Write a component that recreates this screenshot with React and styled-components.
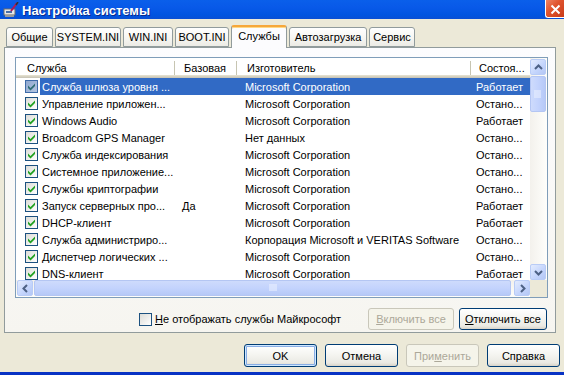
import React from 'react'
import styled, { createGlobalStyle } from 'styled-components'

const FONT = '"Liberation Sans", Arial, sans-serif'

const GlobalStyle = createGlobalStyle`
	html, body {
		margin: 0;
		padding: 0;
	}
	body {
		background: #ECE9D8;
		font-family: ${FONT};
		font-size: 11px;
		color: #000;
	}
`

const Window = styled.div`
	width: 564px;
	height: 375px;
	overflow: hidden;
	display: flex;
	flex-direction: column;
	background: #ECE9D8;
`

const TitleBar = styled.div`
	height: 19px;
	flex: none;
	display: flex;
	align-items: center;
	background: linear-gradient(#0A5FEA, #0859E8 40%, #0054E0 80%, #0A4FD4);
	padding-left: 3px;
	box-sizing: border-box;
`

const TitleText = styled.div`
	color: #fff;
	font-family: ${FONT};
	font-weight: 700;
	font-size: 13px;
	margin-left: 3px;
	padding-top: 1px;
	text-shadow: 1px 1px 0 #0A2A8C;
	flex: 1;
`

const CloseButton = styled.div`
	width: 19px;
	height: 21px;
	margin-top: -4px;
	box-sizing: border-box;
	border: 1px solid #fff;
	border-right: none;
	border-radius: 0 0 0 3px;
	background: linear-gradient(135deg, #F08A6C, #E0542E 45%, #C83A18);
	display: flex;
	align-items: center;
	justify-content: center;
	padding-top: 3px;
`

const Body = styled.div`
	flex: 1;
	display: flex;
	flex-direction: column;
	padding: 6px 4px 0 4px;
`

const TabStrip = styled.div`
	display: flex;
	align-items: flex-end;
	gap: 2px;
	height: 22px;
	padding-left: 2px;
	position: relative;
	z-index: 1;
`

const Tab = styled.div`
	width: ${({ $w }) => $w}px;
	height: ${({ $active }) => ($active ? 23 : 20)}px;
	margin-bottom: ${({ $active }) => ($active ? -1 : 0)}px;
	box-sizing: border-box;
	border: 1px solid #919B9C;
	border-bottom: ${({ $active }) => ($active ? 'none' : '1px solid #919B9C')};
	border-top: ${({ $active }) => ($active ? '2px solid #F6A73B' : '1px solid #919B9C')};
	border-radius: 3px 3px 0 0;
	background: ${({ $active }) =>
		$active ? '#FCFCFE' : 'linear-gradient(#FFFFFF, #F7F7F3 50%, #ECEBE5)'};
	box-shadow: ${({ $active }) => ($active ? 'inset 0 1px 0 #FFD886' : 'none')};
	display: flex;
	align-items: center;
	justify-content: center;
	padding-bottom: ${({ $active }) => ($active ? 3 : 0)}px;
	white-space: nowrap;
`

const Panel = styled.div`
	height: 286px;
	box-sizing: border-box;
	margin-right: 4px;
	border: 1px solid #919B9C;
	background: linear-gradient(#FCFCFE, #F6F5F0);
	padding: 9px 7px 0 10px;
	display: flex;
	flex-direction: column;
`

const ListView = styled.div`
	height: 241px;
	box-sizing: border-box;
	border: 1px solid #7F9DB9;
	background: #fff;
	display: grid;
	grid-template-columns: 1fr 17px;
	grid-template-rows: 1fr 17px;
	overflow: hidden;
`

const ListContent = styled.div`
	overflow: hidden;
`

const COLS = '159px 62px 234px 59px'

const HeaderRow = styled.div`
	display: grid;
	grid-template-columns: ${COLS};
	height: 20px;
	background: #fff;
	box-shadow: inset 0 -1px 0 #CBC7B8, inset 0 -2px 0 #D6D2C2, inset 0 -3px 0 #E2DECD;
`

const HeaderCell = styled.div`
	position: relative;
	padding-left: ${({ $pad }) => $pad}px;
	line-height: 20px;
	white-space: nowrap;
	overflow: hidden;

	&::after {
		content: '';
		display: ${({ $last }) => ($last ? 'none' : 'block')};
		position: absolute;
		right: 0;
		top: 3px;
		height: 14px;
		width: 1px;
		background: #C7C5B2;
		box-shadow: -1px 0 0 #fff;
	}
`

const Row = styled.div`
	display: grid;
	grid-template-columns: ${COLS};
	height: 17px;
	line-height: 19px;
`

const FirstCell = styled.div`
	display: flex;
	align-items: center;
	padding-left: 9px;
	overflow: hidden;
	white-space: nowrap;
	height: 17px;
`

const NameText = styled.span`
	flex: 1;
	height: 17px;
	margin-left: 2px;
	padding-left: 2px;
	background: ${({ $sel }) => ($sel ? '#316AC5' : 'transparent')};
	color: ${({ $sel }) => ($sel ? '#fff' : '#000')};
	overflow: hidden;
`

const Cell = styled.div`
	height: 17px;
	padding-left: ${({ $pad }) => $pad}px;
	background: ${({ $sel }) => ($sel ? '#316AC5' : 'transparent')};
	color: ${({ $sel }) => ($sel ? '#fff' : '#000')};
	white-space: nowrap;
	overflow: hidden;
`

const CheckBox = styled.span`
	width: 13px;
	height: 13px;
	flex: none;
	box-sizing: border-box;
	border: 1px solid ${({ $sel }) => ($sel ? '#3E6BA8' : '#1C5180')};
	background: ${({ $sel }) =>
		$sel ? 'linear-gradient(135deg, #8FA8CF, #B4C6E2)' : 'linear-gradient(135deg, #DCDCD7, #FFFFFF)'};
	display: inline-flex;
	align-items: center;
	justify-content: center;
`

const VScroll = styled.div`
	display: flex;
	flex-direction: column;
	background: linear-gradient(to right, #F3F1EC, #FEFEFB);
	padding-top: 1px;
`

const HScroll = styled.div`
	display: flex;
	background: linear-gradient(#F3F1EC, #FEFEFB);
	padding-left: 1px;
`

const ScrollButton = styled.div`
	width: 16px;
	height: 16px;
	flex: none;
	box-sizing: border-box;
	border: 1px solid #B9CCF6;
	border-radius: 2px;
	background: linear-gradient(135deg, #E4ECFE, #C3D4FC 60%, #B4C7F5);
	display: flex;
	align-items: center;
	justify-content: center;
`

const Thumb = styled.div`
	box-sizing: border-box;
	border: 1px solid #B4C6F3;
	border-radius: 2px;
	background: ${({ $vertical }) =>
		$vertical
			? 'linear-gradient(to right, #CEDBFC, #C3D3FD 50%, #B6C9F7)'
			: 'linear-gradient(#CEDBFC, #C3D3FD 50%, #B6C9F7)'};
	display: flex;
	align-items: center;
	justify-content: center;
	${({ $vertical }) =>
		$vertical
			? 'width: 16px; height: 36px; margin-top: 1px;'
			: 'height: 16px; flex: 1; margin: 0 3px 0 1px;'}
`

const Track = styled.div`
	flex: 1;
`

const Corner = styled.div`
	background: #ECE9D8;
`

const OptionsRow = styled.div`
	display: flex;
	align-items: center;
	height: 22px;
	margin-top: 10px;
	padding-left: 124px;
	padding-right: 1px;
`

const OptionLabel = styled.label`
	display: flex;
	align-items: center;
	gap: 3px;
	white-space: nowrap;
`

const Buttons = styled.div`
	display: flex;
	gap: ${({ $gap }) => $gap}px;
	margin-left: auto;
`

const Button = styled.div`
	width: ${({ $w }) => $w}px;
	height: ${({ $h }) => $h || 23}px;
	box-sizing: border-box;
	border: 1px solid ${({ $disabled }) => ($disabled ? '#C9C7BA' : '#003C74')};
	border-radius: 3px;
	background: ${({ $disabled }) =>
		$disabled ? '#F5F4EA' : 'linear-gradient(#FFFFFF, #F5F5F1 45%, #EAE9E3 85%, #D8D3C8)'};
	color: ${({ $disabled }) => ($disabled ? '#ACA899' : '#000')};
	box-shadow: ${({ $default }) =>
		$default ? 'inset 0 0 0 1px #CEE7FF, inset 0 0 0 2px #89ADE4' : 'none'};
	display: flex;
	align-items: center;
	justify-content: center;
	white-space: nowrap;
`

const DialogButtons = styled.div`
	display: flex;
	justify-content: flex-end;
	gap: 8px;
	margin-top: 11px;
	height: 23px;
`

const BottomFrame = styled.div`
	height: 3px;
	margin-top: auto;
	background: #0832C4;
	margin-left: -4px;
	margin-right: -4px;
`

const U = styled.span`
	text-decoration: underline;
`

const services = [
	['Служба шлюза уровня ...', '', 'Microsoft Corporation', 'Работает'],
	['Управление приложен...', '', 'Microsoft Corporation', 'Остано...'],
	['Windows Audio', '', 'Microsoft Corporation', 'Работает'],
	['Broadcom GPS Manager', '', 'Нет данных', 'Остано...'],
	['Служба индексирования', '', 'Microsoft Corporation', 'Остано...'],
	['Системное приложение...', '', 'Microsoft Corporation', 'Остано...'],
	['Службы криптографии', '', 'Microsoft Corporation', 'Остано...'],
	['Запуск серверных про...', 'Да', 'Microsoft Corporation', 'Работает'],
	['DHCP-клиент', '', 'Microsoft Corporation', 'Работает'],
	['Служба администриро...', '', 'Корпорация Microsoft и VERITAS Software', 'Остано...'],
	['Диспетчер логических ...', '', 'Microsoft Corporation', 'Остано...'],
	['DNS-клиент', '', 'Microsoft Corporation', 'Работает'],
]

const tabs = [
	['Общие', 47],
	['SYSTEM.INI', 66],
	['WIN.INI', 50],
	['BOOT.INI', 54],
	['Службы', 56, true],
	['Автозагрузка', 78],
	['Сервис', 46],
]

function AppIcon() {
	return (
		<svg width="16" height="16" viewBox="0 0 16 16">
			<rect x="1" y="7" width="11" height="6" fill="#E8E8E8" stroke="#6C6C6C" />
			<rect x="2" y="13" width="9" height="2" fill="#9A9A9A" />
			<rect x="3" y="9" width="6" height="2" fill="#4A6FA8" />
			<path d="M14 1 L8 9" stroke="#B0185A" strokeWidth="2" />
			<path d="M15 0 L13 3" stroke="#333" strokeWidth="1.5" />
		</svg>
	)
}

function Check({ checked = true, selected }) {
	return (
		<CheckBox $sel={selected}>
			{checked && (
				<svg width="9" height="9" viewBox="0 0 9 9">
					<path
						d="M1 3.5 L3.5 6 L8 1.5 L8 4 L3.5 8.5 L1 6 Z"
						fill={selected ? '#2E6E75' : '#21A121'}
					/>
				</svg>
			)}
		</CheckBox>
	)
}

function Arrow({ dir }) {
	const points = {
		up: '1,6 4.5,2.5 8,6',
		down: '1,3 4.5,6.5 8,3',
		left: '6,1 2.5,4.5 6,8',
		right: '3,1 6.5,4.5 3,8',
	}[dir]
	return (
		<svg width="9" height="9" viewBox="0 0 9 9">
			<polyline points={points} fill="none" stroke="#4D6185" strokeWidth="2" />
		</svg>
	)
}

function Grip({ vertical }) {
	return (
		<svg width="8" height="8" viewBox="0 0 8 8">
			{[1, 3, 5, 7].map((p) =>
				vertical ? (
					<line key={p} x1="0" y1={p} x2="7" y2={p} stroke="#EEF3FF" strokeWidth="1" />
				) : (
					<line key={p} x1={p} y1="0" x2={p} y2="7" stroke="#EEF3FF" strokeWidth="1" />
				)
			)}
		</svg>
	)
}

function ServiceList() {
	return (
		<ListView>
			<ListContent>
				<HeaderRow>
					<HeaderCell $pad={11}>Служба</HeaderCell>
					<HeaderCell $pad={9}>Базовая</HeaderCell>
					<HeaderCell $pad={10}>Изготовитель</HeaderCell>
					<HeaderCell $pad={8} $last>Состоя...</HeaderCell>
				</HeaderRow>
				{services.map(([name, base, maker, state], i) => {
					const sel = i === 0
					return (
						<Row key={i}>
							<FirstCell>
								<Check selected={sel} />
								<NameText $sel={sel}>{name}</NameText>
							</FirstCell>
							<Cell $sel={sel} $pad={7}>{base}</Cell>
							<Cell $sel={sel} $pad={8}>{maker}</Cell>
							<Cell $sel={sel} $pad={5}>{state}</Cell>
						</Row>
					)
				})}
			</ListContent>
			<VScroll>
				<ScrollButton>
					<Arrow dir="up" />
				</ScrollButton>
				<Thumb $vertical>
					<Grip vertical />
				</Thumb>
				<Track />
				<ScrollButton>
					<Arrow dir="down" />
				</ScrollButton>
			</VScroll>
			<HScroll>
				<ScrollButton>
					<Arrow dir="left" />
				</ScrollButton>
				<Thumb>
					<Grip />
				</Thumb>
				<ScrollButton>
					<Arrow dir="right" />
				</ScrollButton>
			</HScroll>
			<Corner />
		</ListView>
	)
}

export default function App() {
	return (
		<>
			<GlobalStyle />
			<Window>
				<TitleBar>
					<AppIcon />
					<TitleText>Настройка системы</TitleText>
					<CloseButton>
						<svg width="11" height="11" viewBox="0 0 11 11">
							<path d="M1.5 1.5 L9.5 9.5 M9.5 1.5 L1.5 9.5" stroke="#fff" strokeWidth="2" />
						</svg>
					</CloseButton>
				</TitleBar>
				<Body>
					<TabStrip>
						{tabs.map(([label, w, active]) => (
							<Tab key={label} $w={w} $active={active}>
								{label}
							</Tab>
						))}
					</TabStrip>
					<Panel>
						<ServiceList />
						<OptionsRow>
							<OptionLabel>
								<Check checked={false} />
								<span>
									<U>Н</U>е отображать службы Майкрософт
								</span>
							</OptionLabel>
							<Buttons $gap={5}>
								<Button $w={86} $h={22} $disabled>
									<U>В</U>ключить все
								</Button>
								<Button $w={88} $h={22}>
									<U>О</U>тключить все
								</Button>
							</Buttons>
						</OptionsRow>
					</Panel>
					<DialogButtons>
						<Button $w={73} $default>
							OK
						</Button>
						<Button $w={73}>Отмена</Button>
						<Button $w={73} $disabled>
							При<U>м</U>енить
						</Button>
						<Button $w={73}>Справка</Button>
					</DialogButtons>
					<BottomFrame />
				</Body>
			</Window>
		</>
	)
}
